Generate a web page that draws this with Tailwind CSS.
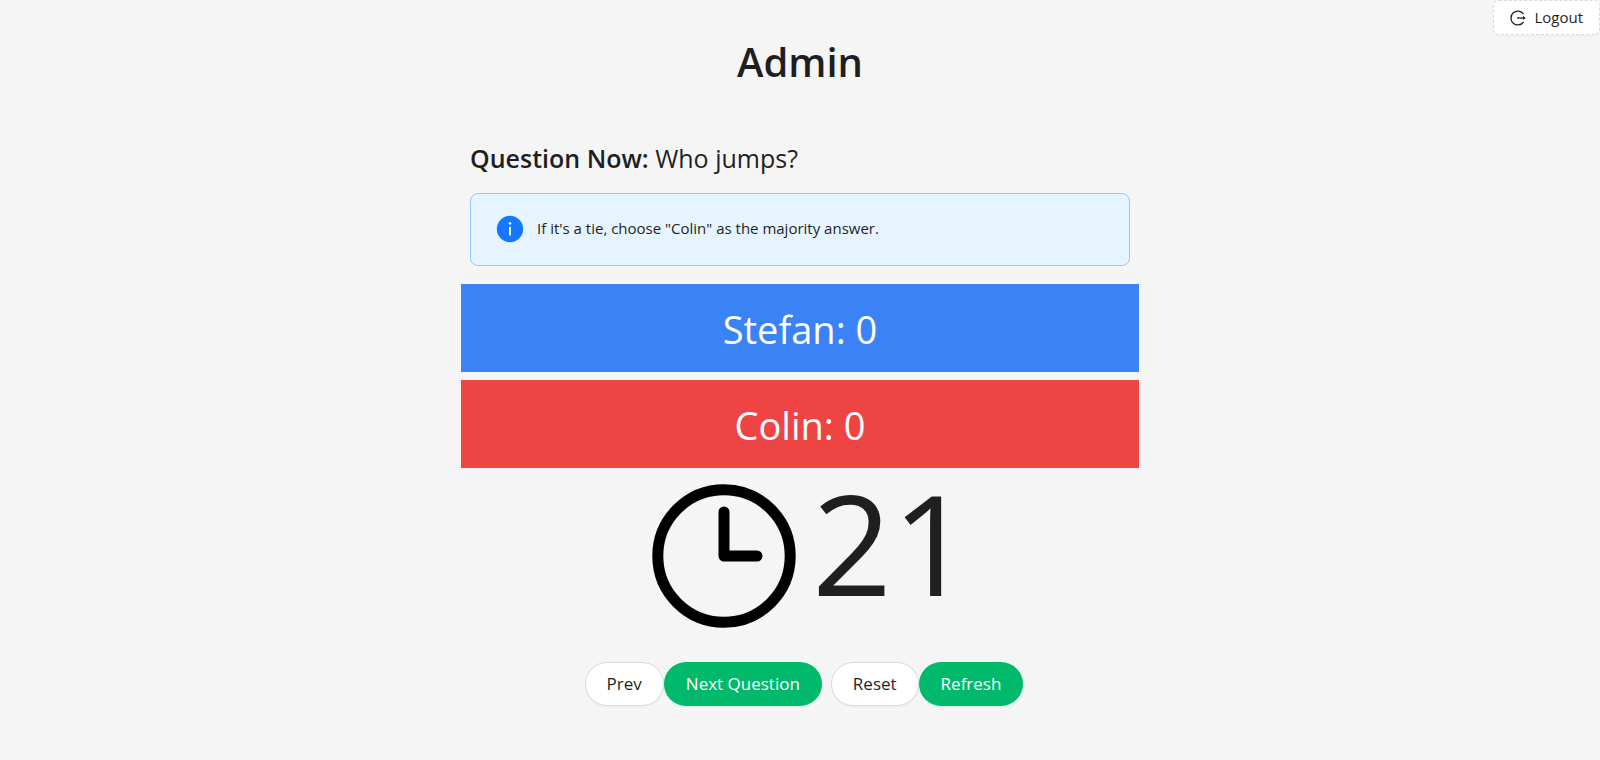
<!DOCTYPE html>
<html lang="en">

<head>
    <meta charset="UTF-8">
    <meta name="viewport" content="width=device-width, initial-scale=1.0">
    <title>Admin</title>
    <script src="https://cdn.jsdelivr.net/npm/@tailwindcss/browser@4"></script>
</head>

<body class="min-h-screen bg-[#f5f5f5] font-['Open_Sans','Noto_Sans',sans-serif] text-[#1f1f1f]">
    <button type="button" class="absolute top-0 right-0 flex h-[35px] items-center gap-2 rounded-md border border-dashed border-[#d9d9d9] bg-white px-4 text-[15px] shadow-[0_2px_0_rgba(0,0,0,0.02)]">
        <svg class="size-4" viewBox="0 0 16 16" fill="none" stroke="currentColor" stroke-width="1.3">
            <path d="M13.6 4.2A6.9 6.9 0 1 0 13.6 11.8" />
            <path d="M7 8h7" />
            <path d="M13 6l2.7 2-2.7 2z" fill="currentColor" stroke="none" />
        </svg>
        Logout
    </button>

    <main class="mx-auto flex w-full max-w-[678px] flex-col pt-8">
        <h1 class="text-center text-[40px] leading-[60px] font-semibold">Admin</h1>

        <section class="mt-[46px] px-[9px]">
            <p class="text-[25px] leading-10"><strong class="font-semibold">Question Now:</strong> <span>Who jumps?</span></p>
            <div role="alert" class="mt-[15px] flex h-[73px] items-center gap-[13px] rounded-lg border border-[#91caff] bg-[#e6f4ff] px-[25px] pb-0.5">
                <svg class="size-7" viewBox="0 0 28 28">
                    <circle cx="14" cy="14" r="13.2" fill="#1677ff" />
                    <circle cx="14" cy="8.4" r="1.3" fill="#e6f4ff" />
                    <rect x="13" y="11.8" width="2" height="8.8" rx="0.3" fill="#e6f4ff" />
                </svg>
                <p class="text-[15px]">If it's a tie, choose "Colin" as the majority answer.</p>
            </div>
        </section>

        <!-- Votes -->
        <section class="mt-[18px] flex flex-col gap-2 text-center text-[38px] leading-[86px] text-white">
            <div class="bg-[#3b82f6] pt-0.5">Stefan: 0</div>
            <div class="bg-[#ef4444] pt-0.5">Colin: 0</div>
        </section>

        <!-- Timer -->
        <section class="mt-4 flex items-start justify-center gap-4 pl-6">
            <svg class="size-36" viewBox="0 0 144 144" fill="none" stroke="#000" stroke-width="11">
                <circle cx="72" cy="72" r="66.2" />
                <path d="M72 28v44h33" stroke-linecap="round" stroke-linejoin="round" />
            </svg>
            <span class="text-[140px] leading-[116px]">21</span>
        </section>

        <!-- Controls -->
        <section class="mt-[34px] flex justify-center gap-[9px] pl-2 text-[17px]">
            <div class="flex">
                <button type="button" class="h-11 rounded-full border border-[#d9d9d9] bg-white px-[21px] shadow-[0_2px_0_rgba(0,0,0,0.02)]">Prev</button>
                <button type="button" class="h-11 rounded-full bg-[#00b96b] px-[22px] text-white shadow-[0_2px_0_rgba(5,255,155,0.06)]">Next Question</button>
            </div>
            <div class="flex">
                <button type="button" class="h-11 rounded-full border border-[#d9d9d9] bg-white px-[21px] shadow-[0_2px_0_rgba(0,0,0,0.02)]">Reset</button>
                <button type="button" class="h-11 rounded-full bg-[#00b96b] px-[22px] text-white shadow-[0_2px_0_rgba(5,255,155,0.06)]">Refresh</button>
            </div>
        </section>
    </main>
</body>

</html>
